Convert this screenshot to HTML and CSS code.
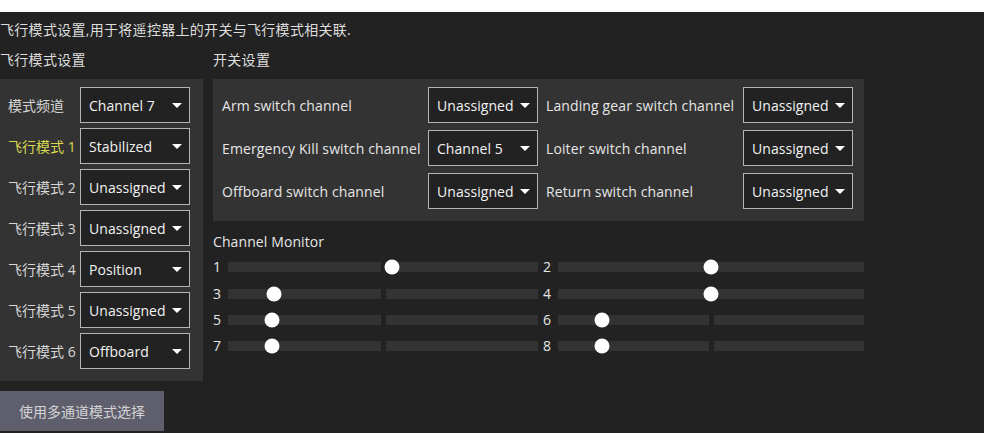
FILE: index.html
```
<!DOCTYPE html>
<html lang="zh">
<head>
<meta charset="utf-8">
<title>飞行模式设置</title>
<link rel="stylesheet" href="styles.css">
</head>
<body>
<div class="page">
  <div class="title">飞行模式设置,用于将遥控器上的开关与飞行模式相关联.</div>
  <div class="columns">
    <div class="left-col">
      <div class="heading">飞行模式设置</div>
      <div class="panel mode-panel">
        <div class="mode-row"><span class="mode-label">模式频道</span><div class="combo"><span>Channel 7</span><svg class="arrow" width="10" height="5" viewBox="0 0 10 5"><path d="M0 0H10L5 5Z" fill="#fff"/></svg></div></div>
        <div class="mode-row"><span class="mode-label active">飞行模式 1</span><div class="combo"><span>Stabilized</span><svg class="arrow" width="10" height="5" viewBox="0 0 10 5"><path d="M0 0H10L5 5Z" fill="#fff"/></svg></div></div>
        <div class="mode-row"><span class="mode-label">飞行模式 2</span><div class="combo"><span>Unassigned</span><svg class="arrow" width="10" height="5" viewBox="0 0 10 5"><path d="M0 0H10L5 5Z" fill="#fff"/></svg></div></div>
        <div class="mode-row"><span class="mode-label">飞行模式 3</span><div class="combo"><span>Unassigned</span><svg class="arrow" width="10" height="5" viewBox="0 0 10 5"><path d="M0 0H10L5 5Z" fill="#fff"/></svg></div></div>
        <div class="mode-row"><span class="mode-label">飞行模式 4</span><div class="combo"><span>Position</span><svg class="arrow" width="10" height="5" viewBox="0 0 10 5"><path d="M0 0H10L5 5Z" fill="#fff"/></svg></div></div>
        <div class="mode-row"><span class="mode-label">飞行模式 5</span><div class="combo"><span>Unassigned</span><svg class="arrow" width="10" height="5" viewBox="0 0 10 5"><path d="M0 0H10L5 5Z" fill="#fff"/></svg></div></div>
        <div class="mode-row"><span class="mode-label">飞行模式 6</span><div class="combo"><span>Offboard</span><svg class="arrow" width="10" height="5" viewBox="0 0 10 5"><path d="M0 0H10L5 5Z" fill="#fff"/></svg></div></div>
      </div>
      <button class="multi-btn">使用多通道模式选择</button>
    </div>
    <div class="right-col">
      <div class="heading">开关设置</div>
      <div class="panel switch-panel">
        <span class="sw-label">Arm switch channel</span>
        <div class="combo"><span>Unassigned</span><svg class="arrow" width="10" height="5" viewBox="0 0 10 5"><path d="M0 0H10L5 5Z" fill="#fff"/></svg></div>
        <span class="sw-label">Landing gear switch channel</span>
        <div class="combo"><span>Unassigned</span><svg class="arrow" width="10" height="5" viewBox="0 0 10 5"><path d="M0 0H10L5 5Z" fill="#fff"/></svg></div>
        <span class="sw-label">Emergency Kill switch channel</span>
        <div class="combo"><span>Channel 5</span><svg class="arrow" width="10" height="5" viewBox="0 0 10 5"><path d="M0 0H10L5 5Z" fill="#fff"/></svg></div>
        <span class="sw-label">Loiter switch channel</span>
        <div class="combo"><span>Unassigned</span><svg class="arrow" width="10" height="5" viewBox="0 0 10 5"><path d="M0 0H10L5 5Z" fill="#fff"/></svg></div>
        <span class="sw-label">Offboard switch channel</span>
        <div class="combo"><span>Unassigned</span><svg class="arrow" width="10" height="5" viewBox="0 0 10 5"><path d="M0 0H10L5 5Z" fill="#fff"/></svg></div>
        <span class="sw-label">Return switch channel</span>
        <div class="combo"><span>Unassigned</span><svg class="arrow" width="10" height="5" viewBox="0 0 10 5"><path d="M0 0H10L5 5Z" fill="#fff"/></svg></div>
      </div>
      <div class="monitor-title">Channel Monitor</div>
      <div class="monitor">
        <div class="ch"><span class="ch-num">1</span><div class="track"><div class="half"></div><div class="half"></div><div class="knob" style="left:52.9%"></div></div></div>
        <div class="ch"><span class="ch-num">2</span><div class="track"><div class="half"></div><div class="half"></div><div class="knob" style="left:50%"></div></div></div>
        <div class="ch"><span class="ch-num">3</span><div class="track"><div class="half"></div><div class="half"></div><div class="knob" style="left:14.7%"></div></div></div>
        <div class="ch"><span class="ch-num">4</span><div class="track"><div class="half"></div><div class="half"></div><div class="knob" style="left:50%"></div></div></div>
        <div class="ch"><span class="ch-num">5</span><div class="track"><div class="half"></div><div class="half"></div><div class="knob" style="left:14.1%"></div></div></div>
        <div class="ch"><span class="ch-num">6</span><div class="track"><div class="half"></div><div class="half"></div><div class="knob" style="left:14.3%"></div></div></div>
        <div class="ch"><span class="ch-num">7</span><div class="track"><div class="half"></div><div class="half"></div><div class="knob" style="left:14.2%"></div></div></div>
        <div class="ch"><span class="ch-num">8</span><div class="track"><div class="half"></div><div class="half"></div><div class="knob" style="left:14.3%"></div></div></div>
      </div>
    </div>
  </div>
</div>
</body>
</html>
```
FILE: styles.css
```
html, body {
  margin: 0;
  padding: 0;
  background: #ffffff;
}

body {
  font-family: "Open Sans", "Noto Sans CJK SC", sans-serif;
  font-size: 14px;
  color: #e6e6e6;
}

.page {
  margin-top: 12px;
  height: 421px;
  box-sizing: border-box;
  background: #222222;
  padding-top: 8px;
}

.title {
  line-height: 20px;
  height: 20px;
  color: #dddddd;
  white-space: nowrap;
  letter-spacing: 0.3px;
}

.columns {
  display: flex;
  gap: 10px;
  margin-top: 10px;
}

.heading {
  line-height: 20px;
  height: 20px;
  color: #dddddd;
  margin-bottom: 9px;
  letter-spacing: 0.3px;
}

.left-col {
  width: 203px;
}

.right-col {
  width: 651px;
}

.panel {
  background: #333333;
}

.mode-panel {
  padding: 8px 13px 12px 8px;
  display: flex;
  flex-direction: column;
  gap: 5px;
}

.mode-row {
  display: flex;
  align-items: center;
  height: 36px;
}

.mode-label {
  width: 72px;
  color: #d6d6d6;
  white-space: nowrap;
}

.mode-label.active {
  color: #d9d94e;
}

.combo {
  box-sizing: border-box;
  width: 110px;
  height: 36px;
  border: 1px solid #b4b4b4;
  background: #222222;
  color: #f2f2f2;
  display: flex;
  align-items: center;
  padding: 0 7px 0 8px;
  white-space: nowrap;
  letter-spacing: 0.05px;
}

.combo .arrow {
  margin-left: auto;
  flex: none;
}

.multi-btn {
  display: block;
  margin-top: 10px;
  width: 164px;
  height: 40px;
  border: none;
  background: #5e5e6c;
  color: #d4d4d4;
  font-family: "Noto Sans CJK SC", sans-serif;
  font-size: 14px;
  padding: 0;
}

.switch-panel {
  display: grid;
  grid-template-columns: 198px 110px 189px 110px;
  grid-auto-rows: 36px;
  column-gap: 8px;
  row-gap: 7px;
  align-items: center;
  padding: 8px 11px 12px 9px;
}

.sw-label {
  white-space: nowrap;
  color: #e6e6e6;
  letter-spacing: 0.12px;
}

.monitor-title {
  margin-top: 11px;
  line-height: 20px;
  height: 20px;
  color: #e6e6e6;
  letter-spacing: 0.1px;
}

.monitor {
  margin-top: 2px;
  display: grid;
  grid-template-columns: 325px 321px;
  column-gap: 5px;
  grid-auto-rows: 26.35px;
}

.ch {
  display: flex;
  align-items: center;
}

.ch-num {
  width: 15px;
  flex: none;
  color: #e6e6e6;
  line-height: 20px;
}

.track {
  position: relative;
  flex: 1;
  height: 10px;
  display: flex;
  gap: 5px;
}

.half {
  flex: 1;
  background: #333333;
}

.knob {
  position: absolute;
  top: 50%;
  width: 15px;
  height: 15px;
  border-radius: 50%;
  background: #ffffff;
  transform: translate(-50%, -50%);
}
```
